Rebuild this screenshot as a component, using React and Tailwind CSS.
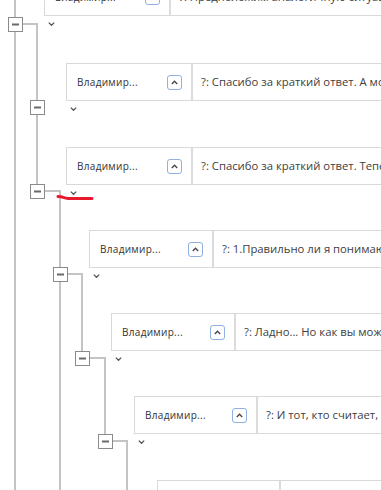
import React from "react";

const NODES = [
  { name: "Владимир...", text: "?: Предположим аналогичную ситуацию, когда", indent: "ml-[44px]", top: "mt-[-22px]", nameW: "w-[124px]" },
  { name: "Владимир...", text: "?: Спасибо за краткий ответ. А можно ещё вопрос", indent: "ml-[66px]", top: "mt-[37px]", nameW: "w-[124px]" },
  { name: "Владимир...", text: "?: Спасибо за краткий ответ. Теперь вопрос", indent: "ml-[66px]", top: "mt-[36px]", nameW: "w-[124px]" },
  { name: "Владимир...", text: "?: 1.Правильно ли я понимаю, что", indent: "ml-[89px]", top: "mt-[35px]", nameW: "w-[122px]" },
  { name: "Владимир...", text: "?: Ладно... Но как вы можете", indent: "ml-[111px]", top: "mt-[35px]", nameW: "w-[122px]" },
  { name: "Владимир...", text: "?: И тот, кто считает, что", indent: "ml-[134px]", top: "mt-[35px]", nameW: "w-[121px]" },
  { name: "Владимир...", text: "?: Хорошо", indent: "ml-[157px]", top: "mt-[36px]", nameW: "w-[121px]" },
];

// toggle boxes: [left, top]
const BOXES = [
  [8, 17],
  [30, 100],
  [30, 184],
  [53, 267],
  [75, 351],
  [98, 434],
];

const LINES = [
  "M15 0 V490",
  "M22 24 H37 V184",
  "M44 191 H60 V490",
  "M67 274 H82 V351",
  "M89 358 H105 V434",
  "M112 441 H127 V490",
];

function Card({ node }) {
  return (
    <div className="flex h-[38px] w-[600px] border border-[#d9d9d9] bg-white">
      <div className={`flex ${node.nameW} shrink-0 items-center justify-between pl-[10px] pr-[9px]`}>
        <span className="text-[10px] tracking-[0.3px] text-[#333]">{node.name}</span>
        <span className="flex h-[15px] w-[15px] items-center justify-center rounded-[3px] border border-[#8fb0e2] bg-white">
          <svg width="7" height="5" viewBox="0 0 7 5">
            <polyline points="0.8,4 3.5,1.2 6.2,4" fill="none" stroke="#444" strokeWidth="1.3" />
          </svg>
        </span>
      </div>
      <div className="w-[2px] shrink-0 bg-[#dcdcdc]" />
      <div className="flex items-center whitespace-nowrap pl-[8px] text-[11.3px] text-[#404040]">{node.text}</div>
    </div>
  );
}

export default function App() {
  return (
    <div className="relative h-[490px] w-[381px] overflow-hidden bg-white" style={{ fontFamily: '"Open Sans", sans-serif' }}>
      <svg className="absolute left-0 top-0" width="381" height="490">
        {LINES.map((d) => (
          <path key={d} d={d} fill="none" stroke="#c4c4c4" strokeWidth="2" />
        ))}
        {BOXES.map(([x, y]) => (
          <g key={`${x}-${y}`}>
            <rect x={x + 0.5} y={y + 0.5} width="14" height="14" fill="#fff" stroke="#8a8a8a" />
            <rect x={x + 4} y={y + 6.5} width="7" height="2" fill="#6a6a6a" />
          </g>
        ))}
        <path d="M58 196.5 C62 196 64 198.5 68 198.5 L92 198.5" fill="none" stroke="#e8192c" strokeWidth="3" strokeLinecap="round" />
      </svg>

      <div className="relative flex flex-col">
        {NODES.map((node, i) => (
          <div key={i} className={`${node.indent} ${node.top}`}>
            <Card node={node} />
            <div className="h-[10px] pl-[4px] pt-[6px]">
              <svg width="7" height="4" viewBox="0 0 7 4">
                <polyline points="0.8,0.6 3.5,3.3 6.2,0.6" fill="none" stroke="#555" strokeWidth="1.3" />
              </svg>
            </div>
          </div>
        ))}
      </div>
    </div>
  );
}
